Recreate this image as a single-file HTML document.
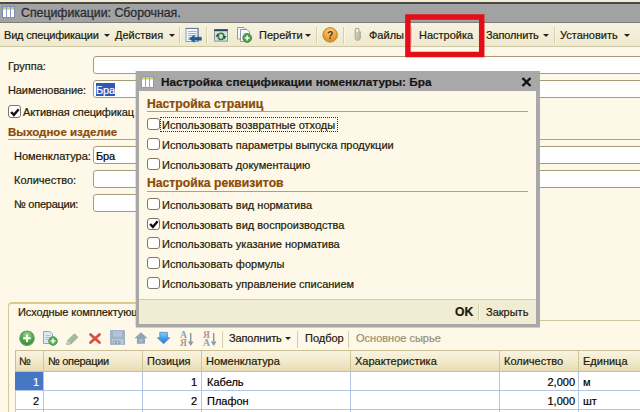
<!DOCTYPE html>
<html lang="ru">
<head>
<meta charset="utf-8">
<title>Спецификации</title>
<style>
*{box-sizing:border-box;margin:0;padding:0}
html,body{width:640px;height:412px;overflow:hidden}
body{font-family:"Liberation Sans",sans-serif;font-size:11px;color:#221a08;background:#fdf8e7;position:relative;-webkit-text-stroke:0.2px}
.abs{position:absolute}
.t{position:absolute;white-space:nowrap;line-height:14px;height:14px}
svg{position:absolute;overflow:visible}
/* main window title */
#topstrip{left:0;top:0;width:640px;height:2px;background:#f3ecd2}
#titlebar{left:0;top:2px;width:640px;height:21px;background:#a2a2a2;border-top:2px solid #4a4a4a;border-bottom:1px solid #7d7d7d}
#title{left:21px;top:6px;font-size:12.3px;color:#2a2c32;-webkit-text-stroke:0.35px #2a2c32;text-shadow:0 1px 0 rgba(255,255,255,.25)}
/* toolbar */
#toolbar{left:0;top:23px;width:640px;height:24px;background:linear-gradient(#f6f2df,#efe9cf);border-bottom:1px solid #cfc8a6}
.sep{position:absolute;width:2px;top:27px;height:17px;border-left:1px solid #d6cfae;border-right:1px solid #f9f6e8}
.arr{position:absolute;width:0;height:0;border-left:3px solid transparent;border-right:3px solid transparent;border-top:3px solid #222}
/* inputs */
.inp{position:absolute;background:#fff;border:1px solid #a59d78;border-radius:3px}
.hdr{position:absolute;white-space:nowrap;font-weight:bold;color:#8a4b08;line-height:14px}
.hl{position:absolute;height:1px;background:#aaa280}
.cb{position:absolute;width:13px;height:12px;background:#fff;border:1px solid #7d7864;border-radius:3px}
/* dialog */
#dlg{left:136px;top:71px;width:404px;height:256px;background:#a8a8a8;box-shadow:0 1px 0 rgba(168,168,168,.55),-1px 0 0 rgba(168,168,168,.35)}
#dlgbody{left:3px;top:20px;width:397px;height:209px;background:#fdf8e7}
#dlgfoot{left:3px;top:228px;width:397px;height:25px;background:#f1ecd4;border-top:1px solid #d2cbab}
#dlgtitle{left:25px;top:4px;font-weight:bold;font-size:11.8px;color:#161616}
/* tab panel */
#panelL{left:8px;top:306px;width:1px;height:110px;background:#d2c8a0}
#tabtop{left:8px;top:302px;width:140px;height:8px;border-top:2px solid #dfc88c;border-left:1px solid #d2c8a0;border-radius:4px 0 0 0}
#paneltop{left:140px;top:320px;width:500px;height:1px;background:#cfc59c}
/* table */
#thead{left:15px;top:350px;width:625px;height:22px;background:linear-gradient(#f9f4e0,#f3ebcd 45%,#e7dcb4);border:1px solid #cabf94;border-right:none}
.th{position:absolute;top:351px;height:20px;border-left:1px solid #cfc49a;white-space:nowrap}
.th span{position:absolute;left:4px;top:3px;line-height:14px}
.row{position:absolute;left:15px;width:625px;height:19px;background:#fff;border-bottom:1px solid #b4c6e6;border-left:1px solid #c9c9c0}
.vl{position:absolute;width:1px;background:#b4c6e6;top:372px;height:40px}
.td{position:absolute;white-space:nowrap;line-height:14px;color:#000}
.r{text-align:right}
</style>
</head>
<body>
<div class="abs" id="topstrip"></div>
<div class="abs" id="titlebar"></div>
<svg style="left:2px;top:6px" width="13" height="12" viewBox="0 0 13 12">
  <rect x="0.5" y="0.5" width="12" height="11" fill="#fff" stroke="#7f8fb4"/>
  <rect x="1" y="1" width="11" height="2.5" fill="#cfca62"/>
  <line x1="4.5" y1="1" x2="4.5" y2="11" stroke="#8c9cc0"/>
  <line x1="8.5" y1="1" x2="8.5" y2="11" stroke="#8c9cc0"/>
</svg>
<div class="t" id="title">Спецификации: Сборочная.</div>

<div class="abs" id="toolbar"></div>
<div class="t" style="left:4px;top:28px;letter-spacing:-0.2px">Вид спецификации</div>
<div class="arr" style="left:104px;top:34px"></div>
<div class="t" style="left:115px;top:28px">Действия</div>
<div class="arr" style="left:169px;top:34px"></div>
<div class="sep" style="left:179px"></div>
<!-- icon1: list with blue arrow -->
<svg style="left:185px;top:27px" width="17" height="16" viewBox="0 0 17 16">
  <rect x="1" y="1.5" width="12" height="13" fill="#f4f8fc" stroke="#8e9cb2"/>
  <path d="M0.5 1.4 H13.5" stroke="#66768e" stroke-width="1"/>
  <path d="M13.2 2 V14.6" stroke="#7f8da2" stroke-width="1.3"/>
  <path d="M3 4.5h8.5M3 6.5h8.5M3 8.5h8.5M3 10.5h3M3 12.5h2" stroke="#9fb4d4" stroke-width="1"/>
  <path d="M4.3 11.7 L9.3 8.2 V10.2 H16.4 V13.2 H9.3 V15.3 Z" fill="#1d5c94" stroke="#1a4f80" stroke-width="0.5"/>
</svg>
<div class="sep" style="left:206px"></div>
<!-- icon2: window with refresh -->
<svg style="left:214px;top:28.7px" width="14" height="12.6" viewBox="0 0 14 12.6">
  <rect x="0.5" y="0.5" width="13" height="11.6" fill="#d9e1e8" stroke="#8795a6"/>
  <rect x="0.3" y="0.3" width="13.4" height="1.9" fill="#2c4468"/>
  <circle cx="7" cy="7.4" r="3.1" fill="none" stroke="#2f7a30" stroke-width="1.6" stroke-dasharray="7.6 2.14" stroke-dashoffset="-1"/>
  <path d="M1.5 7.7 H5.7 L3.6 4.3 Z M8.3 7.1 H12.5 L10.4 10.5 Z" fill="#1f6424"/>
</svg>
<!-- icon3: copy with plus -->
<svg style="left:237px;top:26px" width="16" height="17" viewBox="0 0 16 17">
  <path d="M0.5 1.5 H7 L9.5 4 V13 H0.5 Z" fill="#f4f6f8" stroke="#8e9aa8"/>
  <path d="M3.5 3.5 H10 L12.5 6 V15.5 H3.5 Z" fill="#fbfcfd" stroke="#8e9aa8"/>
  <path d="M5.5 7.5h5M5.5 9.5h4" stroke="#c2cad6"/>
  <circle cx="10.2" cy="12" r="4.4" fill="#4c9e44" stroke="#4d8048" stroke-width="0.9"/>
  <path d="M10.2 9.5 V14.5 M7.7 12 H12.7" stroke="#f4faf2" stroke-width="1.7"/>
</svg>
<div class="t" style="left:259px;top:28px">Перейти</div>
<div class="arr" style="left:305px;top:34px"></div>
<div class="sep" style="left:316px"></div>
<!-- help -->
<svg style="left:322px;top:27px" width="16" height="16" viewBox="0 0 16 16">
  <defs><radialGradient id="hg" cx="0.5" cy="0.3" r="0.75"><stop offset="0" stop-color="#fbd890"/><stop offset="0.55" stop-color="#f2a23a"/><stop offset="1" stop-color="#dc8616"/></radialGradient></defs>
  <circle cx="8.1" cy="7.9" r="7.3" fill="url(#hg)" stroke="#b8862e" stroke-width="0.9"/>
  <text x="8.1" y="11.7" text-anchor="middle" font-family="Liberation Sans" font-weight="bold" font-size="10.5" fill="#5a3208" stroke="none">?</text>
</svg>
<div class="sep" style="left:343px"></div>
<!-- paperclip -->
<svg style="left:354px;top:27px" width="8" height="15" viewBox="0 0 8 15">
  <path d="M6.3 4.5 V11.2 A2.6 2.6 0 0 1 1.2 11.2 V3.2 A1.9 1.9 0 0 1 5 3.2 V10.6 A0.9 0.9 0 0 1 3.1 10.6 V5" fill="none" stroke="#a4a49a" stroke-width="1.1"/>
</svg>
<div class="t" style="left:369px;top:28px">Файлы</div>
<div class="sep" style="left:411px"></div>
<div class="t" style="left:419px;top:28px">Настройка</div>
<div class="t" style="left:486px;top:28px;letter-spacing:-0.15px">Заполнить</div>
<div class="arr" style="left:543px;top:34px"></div>
<div class="sep" style="left:554px"></div>
<div class="t" style="left:560px;top:28px">Установить</div>
<div class="arr" style="left:624px;top:34px"></div>
<!-- red highlight box -->

<!-- form -->
<div class="t" style="left:8px;top:59px">Группа:</div>
<div class="inp" style="left:93px;top:56px;width:560px;height:18px"></div>
<div class="t" style="left:8px;top:83px;letter-spacing:-0.1px">Наименование:</div>
<div class="inp" style="left:93px;top:80px;width:560px;height:18px"></div>
<div class="abs" style="left:96px;top:83px;width:19px;height:13px;background:#3058b6"></div>
<div class="t" style="left:96px;top:83px;color:#fff;letter-spacing:-0.2px">Бра</div>
<div class="cb" style="left:8px;top:105px;height:13px"></div>
<svg style="left:10px;top:108px" width="10" height="9" viewBox="0 0 10 9"><path d="M1.1 4.0 L3.9 6.9 L8.7 1.3" fill="none" stroke="#111" stroke-width="2.4"/></svg>
<div class="t" style="left:23px;top:105px;letter-spacing:-0.12px">Активная спецификац</div>
<div class="hdr" style="left:8px;top:125px;font-size:11.5px">Выходное изделие</div>
<div class="hl" style="left:8px;top:139px;width:632px"></div>
<div class="t" style="left:14px;top:149px">Номенклатура:</div>
<div class="inp" style="left:93px;top:146px;width:560px;height:18px"></div>
<div class="t" style="left:96px;top:149px;color:#000;letter-spacing:-0.2px">Бра</div>
<div class="t" style="left:14px;top:173px">Количество:</div>
<div class="inp" style="left:93px;top:170px;width:560px;height:18px"></div>
<div class="t" style="left:14px;top:197px;letter-spacing:-0.25px">№ операции:</div>
<div class="inp" style="left:93px;top:194px;width:60px;height:18px"></div>

<!-- tab panel -->
<div class="abs" id="panelL"></div>
<div class="abs" id="tabtop"></div>
<div class="abs" id="paneltop"></div>
<div class="t" style="left:18px;top:305px;letter-spacing:-0.1px">Исходные комплектующ</div>

<!-- panel toolbar icons -->
<svg style="left:19px;top:330px" width="16" height="16" viewBox="0 0 16 16">
  <defs><radialGradient id="gg" cx="0.5" cy="0.3" r="0.75"><stop offset="0" stop-color="#a6dc92"/><stop offset="0.55" stop-color="#4aa944"/><stop offset="1" stop-color="#2f8a30"/></radialGradient></defs>
  <circle cx="8" cy="8.2" r="7.2" fill="url(#gg)" stroke="#6f9468" stroke-width="1.1"/>
  <path d="M8 4.4 V12 M4.2 8.2 H11.8" stroke="#fff" stroke-width="1.9"/>
</svg>
<svg style="left:43px;top:331px" width="15" height="15" viewBox="0 0 15 15">
  <path d="M0.5 0.5 H7 L9.5 3 V12.5 H0.5 Z" fill="#dfe9f5" stroke="#8fa8c8"/>
  <path d="M2.5 4.5h5M2.5 6.5h5M2.5 8.5h3" stroke="#a9c0dc"/>
  <circle cx="10" cy="10" r="4.3" fill="#4fae48" stroke="#5a9454" stroke-width="0.9"/>
  <path d="M10 7.5 V12.5 M7.5 10 H12.5" stroke="#fff" stroke-width="1.6"/>
</svg>
<svg style="left:66px;top:333px" width="13" height="12" viewBox="0 0 13 12">
  <path d="M0.5 11.5 L1.5 7.5 L8.5 0.8 L12 4.2 L5 11 Z" fill="#a9b9a0" stroke="#8c9a86" stroke-width="0.6"/>
  <path d="M0.5 11.5 L1.5 7.5 L4.6 10.6 Z" fill="#c9cfc0"/>
</svg>
<svg style="left:89px;top:333px" width="12" height="11" viewBox="0 0 12 11">
  <path d="M1.5 1.5 L10.5 9.5 M10.5 1.5 L1.5 9.5" stroke="#dc4a3e" stroke-width="2.7" stroke-linecap="round"/>
</svg>
<svg style="left:110px;top:330px" width="15" height="15.5" viewBox="0 0 15 15" preserveAspectRatio="none">
  <rect x="0" y="0" width="15" height="14.5" rx="1" fill="#9fb2c6"/>
  <rect x="3" y="1" width="9" height="5.5" fill="#b4c4d4"/>
  <rect x="2" y="9" width="11" height="5" fill="#c4d0dc"/>
  <path d="M3 10.5h2.5v3H3zM6.3 10.5h2.5v3H6.3zM9.6 10.5v3M11.6 10.5l-1.6 1.5 1.6 1.5" fill="none" stroke="#8da0b6" stroke-width="0.9"/>
</svg>
<svg style="left:133.7px;top:332px" width="14.6" height="12" viewBox="0 0 14 12" preserveAspectRatio="none">
  <path d="M6.7 0.3 L13 6.2 H10.6 V11.7 H2.8 V6.2 H0.4 Z" fill="#8fa6b8"/>
  <rect x="5" y="7" width="3.4" height="3.2" fill="#aabccb"/>
</svg>
<svg style="left:157px;top:332px" width="14" height="12" viewBox="0 0 14 12">
  <defs><linearGradient id="bg" x1="0" y1="0" x2="0" y2="1"><stop offset="0" stop-color="#8ccaf8"/><stop offset="0.5" stop-color="#4a9fe8"/><stop offset="1" stop-color="#2478cc"/></linearGradient></defs>
  <path d="M6.6 11.7 L12.8 5.8 H10.4 V0.4 H2.8 V5.8 H0.4 Z" fill="url(#bg)" stroke="#3a7cc0" stroke-width="0.7"/>
</svg>
<!-- sort asc -->
<svg style="left:180px;top:331px" width="14" height="16" viewBox="0 0 14 16">
  <text x="0" y="7.3" font-family="Liberation Serif" font-weight="bold" font-size="9.6" fill="#86a4bc" stroke="none">А</text>
  <text x="0" y="15.4" font-family="Liberation Serif" font-weight="bold" font-size="9.6" fill="#bc948c" stroke="none">Я</text>
  <path d="M10.7 2 V13" stroke="#8a9aa6" stroke-width="1.5"/>
  <path d="M7.9 10.6 L10.7 15 L13.5 10.6 Z" fill="#8a9aa6"/>
</svg>
<svg style="left:203px;top:331px" width="14" height="16" viewBox="0 0 14 16">
  <text x="0" y="7.3" font-family="Liberation Serif" font-weight="bold" font-size="9.6" fill="#bc948c" stroke="none">Я</text>
  <text x="0" y="15.4" font-family="Liberation Serif" font-weight="bold" font-size="9.6" fill="#86a4bc" stroke="none">А</text>
  <path d="M10.7 2 V13" stroke="#8a9aa6" stroke-width="1.5"/>
  <path d="M7.9 10.6 L10.7 15 L13.5 10.6 Z" fill="#8a9aa6"/>
</svg>
<div class="sep" style="left:222px;top:331px"></div>
<div class="t" style="left:229px;top:331px;letter-spacing:-0.15px">Заполнить</div>
<div class="arr" style="left:285px;top:337px"></div>
<div class="sep" style="left:297px;top:331px"></div>
<div class="t" style="left:305px;top:331px">Подбор</div>
<div class="sep" style="left:348px;top:331px"></div>
<div class="t" style="left:356px;top:331px;color:#989070">Основное сырье</div>

<div class="abs" id="thead"></div>
<div class="th" style="left:15px;width:28px;border-left:none"><span>№</span></div>
<div class="th" style="left:43px;width:99px"><span style="letter-spacing:-0.3px">№ операции</span></div>
<div class="th" style="left:142px;width:59px"><span>Позиция</span></div>
<div class="th" style="left:201px;width:149px"><span>Номенклатура</span></div>
<div class="th" style="left:350px;width:149px"><span>Характеристика</span></div>
<div class="th" style="left:499px;width:79px"><span>Количество</span></div>
<div class="th" style="left:578px;width:62px"><span>Единица</span></div>
<div class="row" style="top:372px"></div>
<div class="row" style="top:391px"></div>
<div class="row" style="top:410px"></div>
<div class="abs" style="left:15px;top:372px;width:28px;height:18px;background:#4676c4"></div>
<div class="vl" style="left:43px"></div>
<div class="vl" style="left:142px"></div>
<div class="vl" style="left:201px"></div>
<div class="vl" style="left:350px"></div>
<div class="vl" style="left:499px"></div>
<div class="vl" style="left:578px"></div>
<div class="td r" style="left:19px;width:20px;top:375px;color:#fff">1</div>
<div class="td r" style="left:19px;width:20px;top:394px">2</div>
<div class="td r" style="left:177px;width:20px;top:375px">1</div>
<div class="td r" style="left:177px;width:20px;top:394px">2</div>
<div class="td" style="left:207px;top:375px">Кабель</div>
<div class="td" style="left:207px;top:394px">Плафон</div>
<div class="td r" style="left:535px;width:40px;top:375px">2,000</div>
<div class="td r" style="left:535px;width:40px;top:394px">1,000</div>
<div class="td" style="left:583px;top:375px">м</div>
<div class="td" style="left:583px;top:394px">шт</div>

<!-- dialog -->
<div class="abs" id="dlg">
  <div class="abs" id="dlgbody"></div>
  <div class="abs" id="dlgfoot"></div>
  <svg style="left:5px;top:5px" width="13" height="12" viewBox="0 0 13 12">
    <rect x="0.5" y="0.5" width="12" height="11" fill="#fff" stroke="#8c9cc0"/>
    <rect x="1" y="1" width="11" height="2.5" fill="#d6d060"/>
    <line x1="4.5" y1="1" x2="4.5" y2="11" stroke="#9aa8c8"/>
    <line x1="8.5" y1="1" x2="8.5" y2="11" stroke="#9aa8c8"/>
  </svg>
  <div class="t" id="dlgtitle">Настройка спецификации номенклатуры: Бра</div>
  <svg style="left:385px;top:6px" width="11" height="10" viewBox="0 0 11 10"><path d="M1.5 1 L9.5 9 M9.5 1 L1.5 9" stroke="#111" stroke-width="2.4"/></svg>

  <div class="hdr" style="left:11px;top:26px;font-size:12.2px">Настройка страниц</div>
  <div class="hl" style="left:11px;top:40px;width:381px"></div>
  <div class="cb" style="left:11px;top:47px"></div>
  <div class="t" style="left:26px;top:47px">Использовать возвратные отходы</div>
  <div class="abs" style="left:24px;top:46px;width:178px;height:15px;border:1px dotted #333"></div>
  <div class="cb" style="left:11px;top:67px"></div>
  <div class="t" style="left:26px;top:67px">Использовать параметры выпуска продукции</div>
  <div class="cb" style="left:11px;top:87px"></div>
  <div class="t" style="left:26px;top:87px">Использовать документацию</div>

  <div class="hdr" style="left:11px;top:105px;font-size:12.2px">Настройка реквизитов</div>
  <div class="hl" style="left:11px;top:120px;width:381px"></div>
  <div class="cb" style="left:11px;top:127px"></div>
  <div class="t" style="left:26px;top:127px">Использовать вид норматива</div>
  <div class="cb" style="left:11px;top:147px"></div>
  <svg style="left:13px;top:149px" width="10" height="9" viewBox="0 0 10 9"><path d="M1.1 4.0 L3.9 6.9 L8.7 1.3" fill="none" stroke="#111" stroke-width="2.4"/></svg>
  <div class="t" style="left:26px;top:147px">Использовать вид воспроизводства</div>
  <div class="cb" style="left:11px;top:166px"></div>
  <div class="t" style="left:26px;top:166px">Использовать указание норматива</div>
  <div class="cb" style="left:11px;top:186px"></div>
  <div class="t" style="left:26px;top:186px">Использовать формулы</div>
  <div class="cb" style="left:11px;top:206px"></div>
  <div class="t" style="left:26px;top:206px">Использовать управление списанием</div>

  <div class="t" style="left:319px;top:234px;font-weight:bold;font-size:12.2px">OK</div>
  <div class="sep" style="left:342px;top:233px"></div>
  <div class="t" style="left:350px;top:234px">Закрыть</div>
</div>
<svg style="left:0;top:0" width="640" height="70" viewBox="0 0 640 70"><rect x="407.9" y="17" width="73.8" height="37.5" fill="none" stroke="#e40e19" stroke-width="5.5"/></svg>
</body>
</html>
